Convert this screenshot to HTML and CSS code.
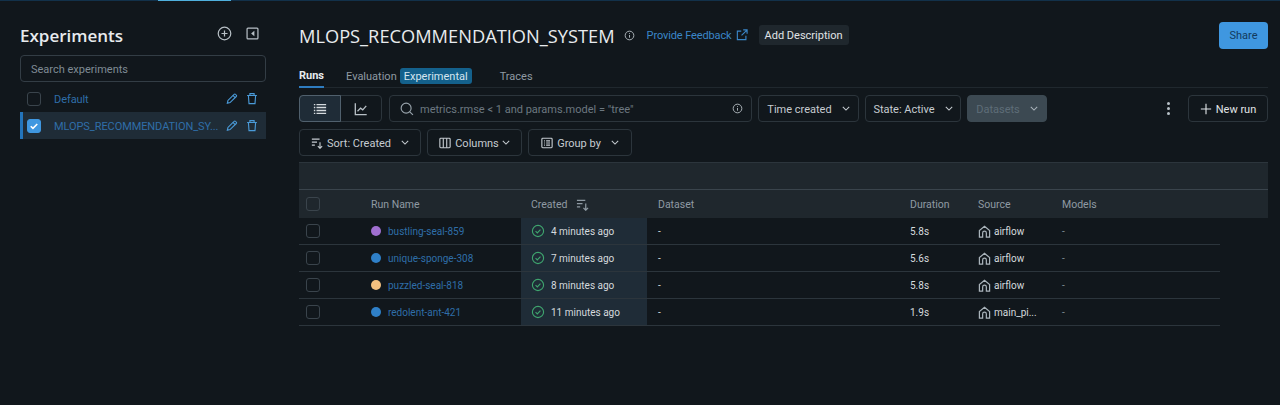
FILE: index.html
```html
<!DOCTYPE html>
<html lang="en">
<head>
    <meta charset="UTF-8">
    <title>MLOPS_RECOMMENDATION_SYSTEM - MLflow</title>
    <link rel="stylesheet" href="styles.css">
</head>
<body>
    <div class="topline"><span class="topline-active"></span></div>
    <div class="page">
        <aside class="sidebar">
            <div class="side-head">
                <h2>Experiments</h2>
                <svg class="side-icon" viewBox="0 0 16 16"><circle cx="8" cy="8" r="6.700"/><path d="M8 4.800v6.400M4.800 8h6.400"/></svg>
                <svg class="side-icon" viewBox="0 0 16 16"><rect x="2.200" y="2.200" width="11.600" height="11.600" rx="1"/><path class="solid" d="M10 5v6L6.500 8z"/></svg>
            </div>
            <input class="side-search" type="text" placeholder="Search experiments">
            <div class="exp-row">
                <span class="check"></span>
                <a class="exp-name">Default</a>
                <svg class="row-icon" viewBox="0 0 16 16"><path d="M1.800 14.200l.8-3.600L10.800 2.400a1.300 1.300 0 0 1 1.900 0l1 1a1.300 1.300 0 0 1 0 1.900L5.400 13.400z"/><path d="M9.300 3.900l2.900 2.900"/></svg>
                <svg class="row-icon" viewBox="0 0 16 16"><path d="M1.500 4h13M5.200 4V1.500h5.600V4M3.200 4l.8 10.800h8L12.800 4"/></svg>
            </div>
            <div class="exp-row selected">
                <span class="check checked"><svg viewBox="0 0 14 14"><path d="M3.200 7.200l2.600 2.600 5-5.200"/></svg></span>
                <a class="exp-name">MLOPS_RECOMMENDATION_SY...</a>
                <svg class="row-icon" viewBox="0 0 16 16"><path d="M1.800 14.200l.8-3.600L10.800 2.400a1.300 1.300 0 0 1 1.900 0l1 1a1.300 1.300 0 0 1 0 1.900L5.400 13.400z"/><path d="M9.300 3.900l2.900 2.900"/></svg>
                <svg class="row-icon" viewBox="0 0 16 16"><path d="M1.500 4h13M5.200 4V1.500h5.600V4M3.200 4l.8 10.800h8L12.800 4"/></svg>
            </div>
        </aside>

        <main class="main">
            <div class="title-row">
                <h1>MLOPS_RECOMMENDATION_SYSTEM</h1>
                <svg class="info-icon" viewBox="0 0 16 16"><circle cx="8" cy="8" r="6.300"/><path d="M8 7.200v4M8 4.600v1.200"/></svg>
                <a class="feedback">Provide Feedback</a>
                <svg class="ext-icon" viewBox="0 0 16 16"><path d="M7 2.800H1.800v11.400h11.400V9M9.600 1.200h5.200v5.200M14.600 1.400L7.400 8.600"/></svg>
                <button class="add-desc">Add Description</button>
                <button class="share">Share</button>
            </div>

            <div class="tabs">
                <a class="tab active">Runs</a>
                <a class="tab eval">Evaluation</a>
                <span class="tag">Experimental</span>
                <a class="tab traces">Traces</a>
            </div>

            <div class="toolbar">
                <div class="toggle">
                    <span class="toggle-btn on"><svg viewBox="0 0 16 16"><path d="M1 3h1.600M4 3h11M1 6.300h1.600M4 6.300h11M1 9.700h1.600M4 9.700h11M1 13h1.600M4 13h11"/></svg></span>
                    <span class="toggle-btn"><svg viewBox="0 0 16 16"><path d="M1.500 1.500v13h13M4 10.500l3.500-3.500 2.500 2L14 4.500"/></svg></span>
                </div>
                <div class="search">
                    <svg class="search-icon" viewBox="0 0 16 16"><circle cx="7" cy="7" r="5.700"/><path d="M11.200 11.200l3.600 3.600"/></svg>
                    <span class="search-text">metrics.rmse &lt; 1 and params.model = "tree"</span>
                    <svg class="info-icon small" viewBox="0 0 16 16"><circle cx="8" cy="8" r="6.300"/><path d="M8 7.200v4M8 4.600v1.200"/></svg>
                </div>
                <button class="btn w-time">Time created <svg class="chev" viewBox="0 0 10 6"><path d="M1 1l4 4 4-4"/></svg></button>
                <button class="btn w-state">State: Active <svg class="chev" viewBox="0 0 10 6"><path d="M1 1l4 4 4-4"/></svg></button>
                <button class="btn w-data disabled">Datasets <svg class="chev" viewBox="0 0 10 6"><path d="M1 1l4 4 4-4"/></svg></button>
                <span class="dots"><i></i><i></i><i></i></span>
                <button class="btn w-new"><svg class="plus" viewBox="0 0 14 14"><path d="M7 1v12M1 7h12"/></svg>New run</button>
            </div>

            <div class="toolbar">
                <button class="btn w-sort"><svg class="btn-icon" viewBox="0 0 14 14"><path d="M1 2.500h9M1 6h6M1 9.500h3.500M10.500 6v7M8 10.700l2.500 2.500 2.500-2.500"/></svg>Sort: Created <svg class="chev" viewBox="0 0 10 6"><path d="M1 1l4 4 4-4"/></svg></button>
                <button class="btn w-cols"><svg class="btn-icon" viewBox="0 0 14 14"><rect x="1" y="1.500" width="12" height="11" rx="1"/><path d="M5 1.500v11M9 1.500v11"/></svg>Columns<svg class="chev tight" viewBox="0 0 10 6"><path d="M1 1l4 4 4-4"/></svg></button>
                <button class="btn w-group"><svg class="btn-icon" viewBox="0 0 14 14"><rect x="1" y="1.500" width="12" height="11" rx="1"/><path d="M3.500 4.500h1M6 4.500h4.500M3.500 7h1M6 7h4.500M3.500 9.500h1M6 9.500h4.500"/></svg>Group by <svg class="chev" viewBox="0 0 10 6"><path d="M1 1l4 4 4-4"/></svg></button>
            </div>

            <div class="table">
                <div class="band"></div>
                <div class="grid head">
                    <span class="c-check"><span class="check"></span></span>
                    <span>Run Name</span>
                    <span class="c-pad">Created <svg class="sort-icon" viewBox="0 0 14 14"><path d="M1 2.500h9M1 6h6M1 9.500h3.500M10.500 6v7M8 10.700l2.500 2.500 2.500-2.500"/></svg></span>
                    <span class="c-pad">Dataset</span>
                    <span class="c-pad">Duration</span>
                    <span class="c-pad">Source</span>
                    <span class="c-pad">Models</span>
                </div>
                <div class="grid row">
                    <span class="c-check"><span class="check"></span></span>
                    <span class="c-name"><i class="dot purple"></i><a>bustling-seal-859</a></span>
                    <span class="c-pad c-created"><svg class="ok" viewBox="0 0 16 16"><circle cx="8" cy="8" r="6.400"/><path d="M5.200 8.200l2 2 3.600-3.800"/></svg>4 minutes ago</span>
                    <span class="c-pad">-</span>
                    <span class="c-pad">5.8s</span>
                    <span class="c-pad"><svg class="src" viewBox="0 0 14 14"><path d="M1.500 13V6L7 1.500 12.500 6v7H9V8.500a2 2 0 0 0-4 0V13z"/></svg>airflow</span>
                    <span class="c-pad dim">-</span>
                </div>
                <div class="grid row">
                    <span class="c-check"><span class="check"></span></span>
                    <span class="c-name"><i class="dot blue"></i><a>unique-sponge-308</a></span>
                    <span class="c-pad c-created"><svg class="ok" viewBox="0 0 16 16"><circle cx="8" cy="8" r="6.400"/><path d="M5.200 8.200l2 2 3.600-3.800"/></svg>7 minutes ago</span>
                    <span class="c-pad">-</span>
                    <span class="c-pad">5.6s</span>
                    <span class="c-pad"><svg class="src" viewBox="0 0 14 14"><path d="M1.500 13V6L7 1.500 12.500 6v7H9V8.500a2 2 0 0 0-4 0V13z"/></svg>airflow</span>
                    <span class="c-pad dim">-</span>
                </div>
                <div class="grid row">
                    <span class="c-check"><span class="check"></span></span>
                    <span class="c-name"><i class="dot peach"></i><a>puzzled-seal-818</a></span>
                    <span class="c-pad c-created"><svg class="ok" viewBox="0 0 16 16"><circle cx="8" cy="8" r="6.400"/><path d="M5.200 8.200l2 2 3.600-3.800"/></svg>8 minutes ago</span>
                    <span class="c-pad">-</span>
                    <span class="c-pad">5.8s</span>
                    <span class="c-pad"><svg class="src" viewBox="0 0 14 14"><path d="M1.500 13V6L7 1.500 12.500 6v7H9V8.500a2 2 0 0 0-4 0V13z"/></svg>airflow</span>
                    <span class="c-pad dim">-</span>
                </div>
                <div class="grid row">
                    <span class="c-check"><span class="check"></span></span>
                    <span class="c-name"><i class="dot blue"></i><a>redolent-ant-421</a></span>
                    <span class="c-pad c-created"><svg class="ok" viewBox="0 0 16 16"><circle cx="8" cy="8" r="6.400"/><path d="M5.200 8.200l2 2 3.600-3.800"/></svg>11 minutes ago</span>
                    <span class="c-pad">-</span>
                    <span class="c-pad">1.9s</span>
                    <span class="c-pad"><svg class="src" viewBox="0 0 14 14"><path d="M1.500 13V6L7 1.500 12.500 6v7H9V8.500a2 2 0 0 0-4 0V13z"/></svg>main_pi...</span>
                    <span class="c-pad dim">-</span>
                </div>
            </div>
        </main>
    </div>
</body>
</html>
```

FILE: styles.css
```css
* {
    box-sizing: border-box;
}
html, body {
    height: 100%;
}
body {
    margin: 0;
    overflow: hidden;
    background-color: #11171c;
    color: #d5dade;
    font-family: Roboto, 'Open Sans', sans-serif;
    font-size: 11px;
}
svg {
    fill: none;
    stroke: currentColor;
    stroke-width: 1.300;
    flex: none;
}
button {
    font-family: inherit;
    font-size: inherit;
}

.topline {
    height: 1px;
    background-color: #12314a;
}
.topline-active {
    display: block;
    width: 73px;
    height: 1px;
    margin-left: 158px;
    background-color: #4fb0dd;
}
.page {
    display: flex;
    padding: 0 12px 0 20px;
}

/* sidebar */
.sidebar {
    width: 246px;
    flex: none;
}
.side-head {
    display: flex;
    align-items: center;
    height: 54px;
    padding-top: 15px;
}
.side-head h2 {
    margin: 0 auto 0 0;
    color: #e8ebee;
    font-family: 'Open Sans', sans-serif;
    font-size: 17px;
    font-weight: 600;
}
.side-icon {
    width: 15px;
    height: 15px;
    margin-left: 13px;
    margin-bottom: 4px;
    color: #b8c0c6;
}
.side-icon:last-child {
    margin-right: 6px;
}
.side-icon .solid {
    fill: currentColor;
    stroke: none;
}
.side-search {
    display: block;
    width: 100%;
    height: 27px;
    margin-bottom: 3px;
    padding: 2px 10px 0;
    background: transparent;
    border: 1px solid #333d45;
    border-radius: 4px;
    color: #d5dade;
    font-family: inherit;
    font-size: 11px;
}
.side-search::placeholder {
    color: #7f8b94;
    opacity: 1;
}
.exp-row {
    display: flex;
    align-items: center;
    height: 27px;
    padding-left: 7px;
    padding-right: 8px;
    color: #2f6ea8;
}
.exp-row.selected {
    padding-left: 4px;
    background-color: #1f2c37;
    border-left: 3px solid #2374bb;
}
.exp-name {
    flex: 1;
    min-width: 0;
    margin-left: 13px;
    padding-top: 1px;
    white-space: nowrap;
    letter-spacing: -0.080px;
}
.row-icon {
    width: 12px;
    height: 13px;
    margin-left: 8px;
    stroke-width: 1.500;
    color: #4a9ad8;
}
.check {
    display: block;
    flex: none;
    width: 14px;
    height: 14px;
    border: 1px solid #3a444c;
    border-radius: 3px;
}
.check.checked {
    background-color: #3f97e0;
    border-color: #3f97e0;
    color: #fff;
}
.check.checked svg {
    display: block;
    width: 12px;
    height: 12px;
    stroke-width: 1.800;
}

/* main column */
.main {
    flex: 1;
    min-width: 0;
    margin-left: 33px;
}
.title-row {
    display: flex;
    align-items: center;
    height: 48px;
    padding-top: 20px;
}
.title-row h1 {
    margin: 0;
    padding-top: 1px;
    color: #e8ebee;
    font-family: 'Open Sans', sans-serif;
    font-size: 18.250px;
    font-weight: 500;
    line-height: 28px;
}
.info-icon {
    width: 11px;
    height: 11px;
    margin-left: 9px;
    color: #b8c0c6;
}
.feedback {
    margin-left: 12px;
    padding-top: 1px;
    letter-spacing: -0.120px;
    color: #3a86c8;
}
.ext-icon {
    width: 12px;
    height: 12px;
    margin-left: 4px;
    stroke-width: 1.500;
    color: #3a86c8;
}
.add-desc {
    height: 20px;
    margin-left: 11px;
    padding: 1px 6px 0;
    background-color: #1f272d;
    border: 0;
    border-radius: 3px;
    color: #e0e4e7;
}
.share {
    width: 49px;
    height: 27px;
    margin-left: auto;
    background-color: #3f97e0;
    border: 0;
    border-radius: 4px;
    color: #123a5c;
}

.tabs {
    display: flex;
    align-items: center;
    height: 39px;
    padding-top: 15px;
    border-bottom: 1px solid #20282e;
    color: #8f9aa3;
}
.tab {
    display: flex;
    align-items: center;
    height: 24px;
    padding-top: 2px;
}
.tab.active {
    color: #e8ebee;
    font-weight: 700;
    border-bottom: 2px solid #2e7cc0;
}
.tab.eval {
    margin-left: 22px;
}
.tag {
    margin-left: 3px;
    margin-top: 1px;
    padding: 0 4px;
    height: 16px;
    line-height: 17px;
    background-color: #14618c;
    border-radius: 3px;
    color: #d5e6f0;
}
.tab.traces {
    margin-left: 28px;
}

.toolbar {
    display: flex;
    align-items: center;
    gap: 6px;
    height: 27px;
    margin-top: 7px;
}
.toggle {
    display: flex;
    width: 83px;
    height: 27px;
    margin-right: 1px;
    border: 1px solid #2c353c;
    border-radius: 4px;
}
.toggle-btn {
    display: flex;
    align-items: center;
    justify-content: center;
    width: 41px;
    color: #b8c0c6;
}
.toggle-btn.on {
    width: 42px;
    margin: -1px 0 -1px -1px;
    background-color: #1f2c37;
    border: 1px solid #50606d;
    border-radius: 4px 0 0 4px;
    color: #d5dade;
}
.toggle-btn svg {
    width: 14px;
    height: 14px;
    stroke-width: 1.500;
}
.search {
    display: flex;
    align-items: center;
    width: 363px;
    height: 27px;
    padding: 0 8px 0 10px;
    border: 1px solid #2c353c;
    border-radius: 4px;
}
.search-icon {
    width: 14px;
    height: 14px;
    color: #98a3ab;
}
.search-text {
    flex: 1;
    margin-left: 6px;
    padding-top: 1px;
    color: #6c7780;
}
.info-icon.small {
    margin-left: 0;
}
.btn {
    display: flex;
    align-items: center;
    justify-content: center;
    height: 27px;
    padding: 2px 0 0;
    background: transparent;
    border: 1px solid #2c353c;
    border-radius: 4px;
    color: #c6ccd1;
}
.btn svg {
    margin-top: -2px;
}
.chev {
    width: 8px;
    height: 5px;
    margin-left: 10px;
    stroke-width: 1.300;
}
.chev.tight {
    margin-left: 3px;
}
.w-time { width: 101px; }
.w-state { width: 96px; }
.w-data { width: 80px; }
.w-new { width: 80px; color: #e0e4e7; }
.w-sort { width: 122px; }
.w-cols { width: 95px; }
.w-group { width: 104px; }
.btn.disabled {
    background-color: #3c4952;
    border-color: #3c4952;
    color: #5e6d78;
}
.btn.disabled .chev {
    color: #aab4bb;
}
.dots {
    display: flex;
    flex-direction: column;
    gap: 2px;
    margin-left: auto;
    margin-right: 12px;
}
.dots i {
    display: block;
    width: 3px;
    height: 3px;
    border-radius: 50%;
    background-color: #b8c0c6;
}
.plus {
    width: 12px;
    height: 12px;
    margin-right: 4px;
}
.btn-icon {
    width: 12px;
    height: 12px;
    margin-right: 4px;
}

/* runs table */
.table {
    margin-top: 6px;
}
.band {
    height: 28px;
    background-color: #1f272d;
    border-top: 1px solid #2c353c;
    border-bottom: 1px solid #3a444c;
}
.grid {
    display: grid;
    grid-template-columns: 72px 150px 126px 252px 68px 84px 169px;
    align-items: center;
}
.grid > span {
    display: flex;
    align-items: center;
    height: 100%;
    min-width: 0;
}
.grid > span:nth-child(3) {
    padding-left: 10px;
}
.head {
    height: 28px;
    background-color: #1f272d;
    color: #8f9aa3;
    font-size: 10.500px;
}
.row {
    width: 921px;
    height: 27px;
    border-bottom: 1px solid #2c353c;
    font-size: 10px;
}
.c-check {
    padding-left: 7px;
}
.c-pad {
    padding-left: 11px;
}
.c-name a {
    color: #2f6ea8;
}
.dot {
    display: block;
    width: 10px;
    height: 10px;
    margin-right: 7px;
    border-radius: 50%;
}
.dot.purple { background-color: #a06fd0; }
.dot.blue { background-color: #2f80c8; }
.dot.peach { background-color: #f4c07f; }
.c-created {
    background-color: #1f2c37;
}
.ok {
    width: 14px;
    height: 14px;
    margin-right: 6px;
    color: #3fa46e;
}
.sort-icon {
    width: 13px;
    height: 13px;
    margin-left: 8px;
    color: #8f9aa3;
}
.src {
    width: 13px;
    height: 13px;
    margin-right: 3px;
    color: #aab4bb;
}
.dim {
    color: #7f8b94;
}
```
